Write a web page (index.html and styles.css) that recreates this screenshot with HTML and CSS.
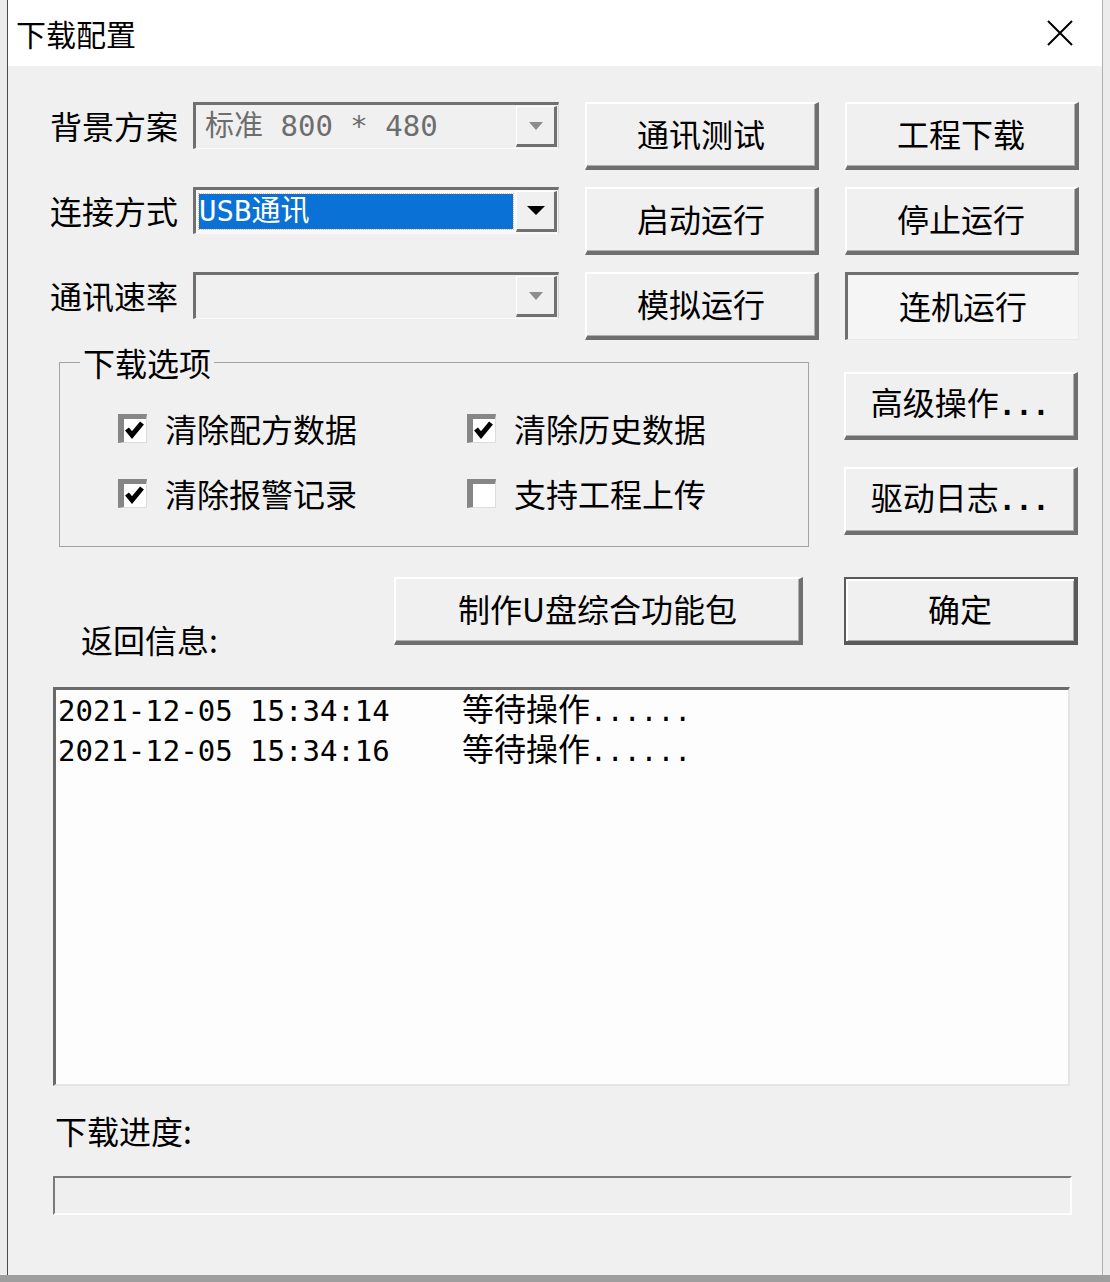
FILE: index.html
```html
<!DOCTYPE html>
<html lang="zh-CN">
<head>
  <meta charset="UTF-8" />
  <title>下载配置</title>
  <link rel="stylesheet" href="styles.css">
</head>
<body>
  <div class="screen">
    <div class="behind"></div>

    <div class="window">
      <div class="titlebar">
        <span class="title">下载配置</span>
        <svg class="close" width="26" height="26" viewBox="0 0 26 26">
          <path d="M1 1 L25 25 M25 1 L1 25" stroke="#000" stroke-width="2" fill="none"/>
        </svg>
      </div>

      <div class="client">
        <!-- 상단: 콤보 + 버튼 -->
        <div class="top-grid">
          <span class="lbl">背景方案</span>
          <div class="combo">
            <span class="combo-text disabled">标准 800 * 480</span>
            <span class="combo-btn"><i class="arrow"></i></span>
          </div>
          <button class="btn">通讯测试</button>
          <button class="btn">工程下载</button>

          <span class="lbl">连接方式</span>
          <div class="combo combo-on">
            <span class="combo-sel">USB通讯</span>
            <span class="combo-btn"><i class="arrow dark"></i></span>
          </div>
          <button class="btn">启动运行</button>
          <button class="btn">停止运行</button>

          <span class="lbl">通讯速率</span>
          <div class="combo">
            <span class="combo-text"></span>
            <span class="combo-btn"><i class="arrow"></i></span>
          </div>
          <button class="btn">模拟运行</button>
          <button class="btn pressed">连机运行</button>
        </div>

        <div class="mid">
          <fieldset class="group">
            <legend>下载选项</legend>
            <div class="options">
              <label class="option"><span class="check on"><svg width="22" height="23" viewBox="0 0 22 23"><path d="M3 10 L8 16 L18 4" stroke="#000" stroke-width="5" fill="none"/></svg></span>清除配方数据</label>
              <label class="option"><span class="check on"><svg width="22" height="23" viewBox="0 0 22 23"><path d="M3 10 L8 16 L18 4" stroke="#000" stroke-width="5" fill="none"/></svg></span>清除历史数据</label>
              <label class="option"><span class="check on"><svg width="22" height="23" viewBox="0 0 22 23"><path d="M3 10 L8 16 L18 4" stroke="#000" stroke-width="5" fill="none"/></svg></span>清除报警记录</label>
              <label class="option"><span class="check"></span>支持工程上传</label>
            </div>
          </fieldset>

          <div class="side">
            <button class="btn">高级操作<span class="dots">...</span></button>
            <button class="btn">驱动日志<span class="dots">...</span></button>
          </div>
        </div>

        <div class="actions">
          <span class="info-label">返回信息:</span>
          <button class="btn btn-wide">制作U盘综合功能包</button>
          <button class="btn btn-ok">确定</button>
        </div>

        <div class="log">
          <div class="log-line"><span class="time">2021-12-05 15:34:14</span><span class="msg">等待操作<span class="dots">......</span></span></div>
          <div class="log-line"><span class="time">2021-12-05 15:34:16</span><span class="msg">等待操作<span class="dots">......</span></span></div>
        </div>

        <div class="progress-label">下载进度:</div>
        <div class="progress"></div>
      </div>
    </div>

    <div class="behind-right"></div>
  </div>
</body>
</html>
```

FILE: styles.css
```css
* { box-sizing: border-box; margin: 0; padding: 0; }

body {
  width: 1110px;
  height: 1282px;
  background-color: #9e9e9e;
  font-family: "Noto Sans CJK SC", "Noto Sans", sans-serif;
  color: #000;
  overflow: hidden;
}

.screen {
  display: flex;
  height: 1275px;
}

.behind {
  width: 8px;
  background-color: #ececec;
  border-right: 1px solid #4a4a4a;
}

.behind-right {
  flex: 1;
  background-color: #ececec;
  border-left: 1px solid #b0b0b0;
}

.window {
  width: 1094px;
  background-color: #f0f0f0;
  display: flex;
  flex-direction: column;
}

.titlebar {
  height: 66px;
  background-color: #fff;
  display: flex;
  align-items: center;
  justify-content: space-between;
  padding: 0 29px 0 8px;
}

.title {
  font-size: 30px;
  line-height: 1;
}

.client {
  flex: 1;
  padding-top: 36px;
}

/* 상단 그리드 */
.top-grid {
  display: grid;
  grid-template-columns: 117px 366px 234px 234px;
  grid-auto-rows: 68px;
  gap: 17px 26px;
  margin-left: 42px;
}

.lbl {
  font-size: 32px;
  line-height: 47px;
  white-space: nowrap;
}

.combo {
  height: 47px;
  display: flex;
  border-style: solid;
  border-width: 3px 1px 1px 3px;
  border-color: #707070 #d4d4d4 #fafafa #707070;
  background-color: #f0f0f0;
  padding: 1px 1px 1px 0;
}

.combo-text {
  flex: 1;
  font-family: "DejaVu Sans Mono", "Noto Sans CJK SC", monospace;
  font-size: 29px;
  line-height: 41px;
  padding-left: 9px;
  white-space: pre;
}

.combo-text.disabled {
  color: #6d6d6d;
}

.combo-on {
  background-color: #fbf7f4;
}

.combo-sel {
  flex: 1;
  margin: 3px;
  background-color: #0a72d6;
  color: #fff;
  outline: 1px dotted #e8b890;
  font-family: "DejaVu Sans Mono", "Noto Sans CJK SC", monospace;
  font-size: 29px;
  line-height: 35px;
}

.combo-btn {
  width: 41px;
  display: flex;
  align-items: center;
  justify-content: center;
  border-style: solid;
  border-width: 1px 3px 3px 1px;
  border-color: #fff #707070 #707070 #fff;
  background-color: #f0f0f0;
}

.arrow {
  width: 0;
  height: 0;
  border-left: 7px solid transparent;
  border-right: 7px solid transparent;
  border-top: 8px solid #8c8c8c;
}

.arrow.dark {
  border-left-width: 9px;
  border-right-width: 9px;
  border-top: 9px solid #000;
}

/* 버튼 */
.btn {
  font-family: inherit;
  font-size: 32px;
  line-height: 40px;
  color: #000;
  background-color: #f0f0f0;
  height: 68px;
  padding-bottom: 4px;
  border-style: solid;
  border-width: 2px 4px 4px 2px;
  border-color: #fff #6f6f6f #6f6f6f #fff;
  box-shadow: inset -1px -1px 0 #b0b0b0;
  white-space: nowrap;
}

.btn .dots {
  font-family: "DejaVu Sans Mono", monospace;
  font-size: 28px;
  font-weight: bold;
}

.btn.pressed {
  border-width: 3px 1px 1px 3px;
  border-color: #6f6f6f #e8e8e8 #e8e8e8 #6f6f6f;
  background-color: #f5f5f5;
  box-shadow: none;
}

.btn-ok {
  width: 234px;
  border-color: #5a5a5a;
  box-shadow: inset 2px 2px 0 #fff, inset -1px -1px 0 #a8a8a8;
}

.btn-wide {
  width: 409px;
  margin-right: 41px;
}

/* 다운로드 옵션 */
.mid {
  display: flex;
  gap: 35px;
  margin: 4px 0 0 51px;
}

.group {
  width: 750px;
  height: 203px;
  border: 1px solid #a3a3a3;
  padding: 0;
}

.group legend {
  font-size: 32px;
  line-height: 36px;
  margin-left: 20px;
  padding: 0 3px;
}

.options {
  display: grid;
  grid-template-columns: 349px 260px;
  grid-auto-rows: 36px;
  row-gap: 29px;
  margin: 30px 0 0 58px;
}

.option {
  display: flex;
  align-items: center;
  gap: 18px;
  font-size: 32px;
  white-space: nowrap;
}

.check {
  width: 29px;
  height: 29px;
  display: flex;
  align-items: center;
  justify-content: center;
  border-style: solid;
  border-width: 5px 1px 1px 6px;
  border-color: #868686 #dcdcdc #dcdcdc #868686;
  background-color: #fff;
}

.side {
  width: 234px;
  display: flex;
  flex-direction: column;
  gap: 27px;
  padding-top: 28px;
}

/* 하단 */
.actions {
  display: flex;
  height: 68px;
  margin: 30px 0 0 73px;
}

.info-label {
  width: 313px;
  font-size: 32px;
  line-height: 36px;
  margin-top: 44px;
}

.log {
  width: 1017px;
  height: 399px;
  margin: 42px 0 0 45px;
  border-style: solid;
  border-width: 3px 2px 2px 3px;
  border-color: #6a6a6a #e4e4e4 #e4e4e4 #6a6a6a;
  background-color: #fdfdfd;
  padding-left: 2px;
}

.log-line {
  height: 40px;
  line-height: 34px;
  white-space: nowrap;
}

.time {
  display: inline-block;
  width: 404px;
  font-family: "DejaVu Sans Mono", monospace;
  font-size: 29px;
}

.msg {
  font-size: 32px;
}

.msg .dots {
  font-family: "DejaVu Sans Mono", monospace;
  font-size: 28px;
}

.progress-label {
  font-size: 32px;
  line-height: 36px;
  margin: 26px 0 0 47px;
}

.progress {
  width: 1019px;
  height: 39px;
  margin: 28px 0 0 45px;
  border-style: solid;
  border-width: 2px;
  border-color: #7a7a7a #fdfdfd #fdfdfd #7a7a7a;
  background-color: #efefef;
}
```
